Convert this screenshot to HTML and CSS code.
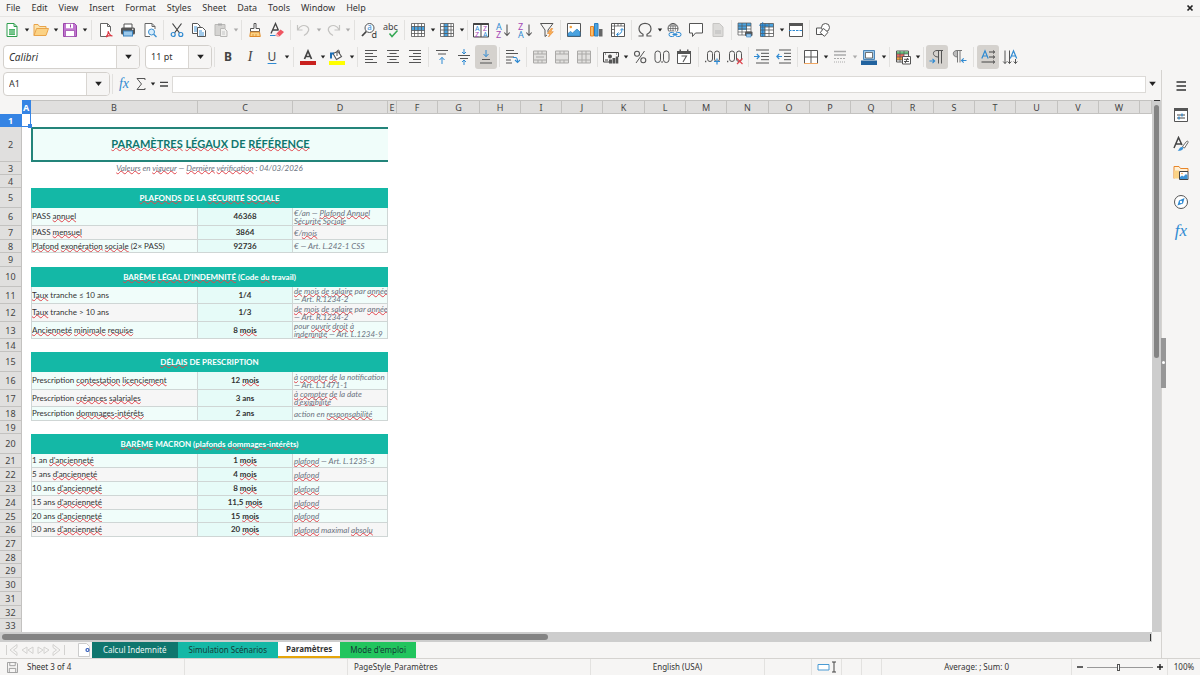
FILE: index.html
```html
<!DOCTYPE html>
<html lang="fr">
<head>
<meta charset="utf-8">
<title>Paramètres</title>
<link rel="stylesheet" href="styles.css">
</head>
<body>
<svg class="sprite" aria-hidden="true">
  <symbol id="caret" viewBox="0 0 6 4"><path d="M.8.5h4.4L3 3.4z" fill="#222"/></symbol>
  <symbol id="new" viewBox="0 0 16 16"><path d="M3 1.5h7l3 3v10H3z" fill="#fff" stroke="#2d9d4c"/><path d="M10 1.5v3h3" fill="none" stroke="#2d9d4c"/><path d="M5 7h6v6H5z" fill="#4fb56b"/><path d="M5 9h6M5 11h6" stroke="#d9f2df" stroke-width=".6"/></symbol>
  <symbol id="open" viewBox="0 0 16 16"><path d="M1 13.5v-11h4l1.5 2H13v3" fill="#fbe3ad" stroke="#e9a44a"/><path d="M1 13.5L3.5 6.5h12L13 13.5z" fill="#fbd285" stroke="#e9a44a"/></symbol>
  <symbol id="save" viewBox="0 0 16 16"><path d="M1.5 1.5h11l2 2v11h-13z" fill="#c176cf" stroke="#9a45aa"/><path d="M4 1.8h7v4.500H4z" fill="#fff"/><path d="M3.500 8.500h9v6h-9z" fill="#fff" stroke="#9a45aa" stroke-width=".7"/><path d="M8.500 2.500v3" stroke="#9a45aa"/></symbol>
  <symbol id="pdf" viewBox="0 0 16 16"><path d="M8.500 14.500H2.500v-13h7l3 3v5" fill="#fff" stroke="#666"/><path d="M9.500 1.500v3h3" fill="none" stroke="#666"/><path d="M8 15c2-2 2.500-4 2.300-6 .5 3 1.700 4.500 4.200 5-2.500-.8-4.500-.3-6.500 1z" fill="none" stroke="#d9333f" stroke-width="1.100"/></symbol>
  <symbol id="print" viewBox="0 0 16 16"><path d="M4 6V2h8v4" fill="#fff" stroke="#555"/><rect x="1" y="5.500" width="14" height="7" rx="1.500" fill="#555"/><rect x="3.500" y="9" width="9" height="5" fill="#9bc9ec" stroke="#3b82be"/><circle cx="12.800" cy="7.300" r=".7" fill="#fff"/></symbol>
  <symbol id="preview" viewBox="0 0 16 16"><path d="M13 7V4.500l-3-3H3v13h5" fill="#fff" stroke="#666"/><path d="M10 1.500v3h3" fill="none" stroke="#666"/><circle cx="9.500" cy="10" r="3" fill="#d7ecfb" stroke="#3b8fd0"/><path d="M11.700 12.200l2.800 2.800" stroke="#3b8fd0" stroke-width="1.300"/></symbol>
  <symbol id="cut" viewBox="0 0 16 16"><path d="M3.500 1.500l7 9.500M12.500 1.500L5.500 11" stroke="#444" stroke-width="1.200" fill="none"/><circle cx="4.200" cy="12.500" r="2" fill="none" stroke="#2f8ad2" stroke-width="1.200"/><circle cx="11.800" cy="12.500" r="2" fill="none" stroke="#2f8ad2" stroke-width="1.200"/></symbol>
  <symbol id="copy" viewBox="0 0 16 16"><path d="M1.500 1.500h5l2.500 2.500v7.500H1.500z" fill="#fff" stroke="#555"/><path d="M6.500 5.500h5l3 3v6h-8z" fill="#fff" stroke="#555"/><path d="M3 5h3M3 7h3M3 9h3M8 9h3M8 11h5M8 13h5" stroke="#2f8ad2" stroke-width=".9"/></symbol>
  <symbol id="paste" viewBox="0 0 16 16"><path d="M2 2.500h10v11H2z" fill="#d5d4d2" stroke="#b9b8b6"/><path d="M5 1.500h4v2H5z" fill="#aaa"/><path d="M7.500 6.500h4l2.500 2.500v5.500H7.500z" fill="#f1f0ee" stroke="#b9b8b6"/><path d="M9 10h3M9 12h3" stroke="#bbb" stroke-width=".8"/></symbol>
  <symbol id="brush" viewBox="0 0 16 16"><path d="M7 1.500h2v5h3.500v3h-9v-3H7z" fill="#fff" stroke="#555"/><path d="M3.500 10h9l.8 4.500H2.800z" fill="#fbd285" stroke="#e08b2a"/><path d="M6 14v-2M9 14v-2" stroke="#e08b2a" stroke-width=".8"/></symbol>
  <symbol id="clear" viewBox="0 0 16 16"><path d="M2 11.500L6.500 1.500 9.500 8.500M3.800 8h5" fill="none" stroke="#444" stroke-width="1.300"/><path d="M1 13.500h6" stroke="#2f8ad2"/><path d="M7.500 11.500l4-4 3.500 2.500-4.500 4.500z" fill="#ef5561"/><path d="M7.500 11.500l3 3-1.500.6-3-1.600z" fill="#f7a8ad"/></symbol>
  <symbol id="undo" viewBox="0 0 16 16"><path d="M1.500 3v5h5M2 7.500C4 3.500 8 2.500 11 4.500c3 2.200 2 6-3 9" fill="none" stroke="#c4c3c1" stroke-width="1.200"/></symbol>
  <symbol id="redo" viewBox="0 0 16 16"><path d="M14.500 3v5h-5M14 7.500C12 3.500 8 2.500 5 4.500c-3 2.200-2 6 3 9" fill="none" stroke="#c4c3c1" stroke-width="1.200"/></symbol>
  <symbol id="find" viewBox="0 0 16 16"><circle cx="8.500" cy="6" r="4.500" fill="#f9fcff" stroke="#555"/><path d="M5.300 9.500L1 14" stroke="#444" stroke-width="1.800"/><text x="6.300" y="8.300" font-size="8" fill="#2f8ad2">a</text><text x="10.500" y="15.500" font-size="9" fill="#333">d</text></symbol>
  <symbol id="spell" viewBox="0 0 16 16"><text x="0" y="7.500" font-size="9" fill="#444">abc</text><path d="M6.500 11.500l2.500 3 5.500-6" fill="none" stroke="#35a854" stroke-width="1.500"/></symbol>
  <symbol id="rows" viewBox="0 0 16 16"><path d="M1.500 1.500h13v13h-13z" fill="#fff"/><path d="M1.500 4.500h13v4h-13z" fill="#4aa3e0"/><path d="M1.500 1.500h13v13h-13zM1.500 4.500h13M1.500 8.500h13M1.500 11.500h13M4.500 1.500v13M8 1.500v13M11.500 1.500v13" fill="none" stroke="#555" stroke-width=".8"/></symbol>
  <symbol id="cols" viewBox="0 0 16 16"><path d="M1.500 1.500h13v13h-13z" fill="#fff"/><path d="M5 1.500h4v13H5z" fill="#4aa3e0"/><path d="M1.500 1.500h13v13h-13zM1.500 4.500h13M1.500 8h13M1.500 11.500h13M5 1.500v13M9 1.500v13M12 1.500v13" fill="none" stroke="#555" stroke-width=".8"/></symbol>
  <symbol id="sort" viewBox="0 0 16 16"><path d="M.5 1.500h15v13.500H.5z" fill="#fff" stroke="#444"/><path d="M.5 1h15v2H.5zM7.500 1h1v14h-1z" fill="#444"/><g font-size="7"><text x="2" y="8.800" fill="#2f8ad2">A</text><text x="2" y="14.500" fill="#a447b5">Z</text><text x="10" y="8.800" fill="#a447b5">Z</text><text x="10" y="14.500" fill="#2f8ad2">A</text></g></symbol>
  <symbol id="asc" viewBox="0 0 16 16"><g font-size="9"><text x="1" y="7.500" fill="#2f8ad2">A</text><text x="1" y="15.500" fill="#a447b5">Z</text></g><path d="M12 2.500v11M9.300 10.500L12 13.500l2.700-3" fill="none" stroke="#555" stroke-width="1.100"/></symbol>
  <symbol id="desc" viewBox="0 0 16 16"><g font-size="9"><text x="1" y="7.500" fill="#a447b5">Z</text><text x="1" y="15.500" fill="#2f8ad2">A</text></g><path d="M12 2.500v11M9.300 10.500L12 13.500l2.700-3" fill="none" stroke="#555" stroke-width="1.100"/></symbol>
  <symbol id="filter" viewBox="0 0 16 16"><path d="M1.500 1.500h12.500L9 8v2.500M1.500 1.500L6 8v6.500l2-1.500" fill="none" stroke="#555"/><path d="M12 6.500l-3.500 5h2.500L9.500 15l4.800-5.300h-2.600l2-3.200z" fill="#f9b25c" stroke="#e8862a" stroke-width=".6"/></symbol>
  <symbol id="image" viewBox="0 0 16 16"><path d="M1.500 1.500h13v13h-13z" fill="#fff" stroke="#555"/><circle cx="4.800" cy="5" r="1.300" fill="#f6a13d"/><path d="M2 14v-2.500l2.500-2 2 1.500L11 7l3 3v4z" fill="#4aa3e0" stroke="#2c7fc0" stroke-width=".7"/></symbol>
  <symbol id="chart" viewBox="0 0 16 16"><path d="M2.500 4.500h3v9.500h-3z" fill="#fbbf6b" stroke="#e8862a"/><path d="M6.500 1.500h3.500v12.500H6.500z" fill="#4aa3e0" stroke="#2c7fc0"/><path d="M11 7h3.500v7.500H11z" fill="#666"/></symbol>
  <symbol id="pivot" viewBox="0 0 16 16"><path d="M1.500 1.500h13v13h-13z" fill="#fff" stroke="#555"/><path d="M1.500 4h13M4.500 1.500v13M8 1.500V4M11 1.500V4M1.500 7.500h3M1.500 11h3" stroke="#555" stroke-width=".8"/><path d="M7 12.500c3.500 0 5-2 5-5.500M10.300 8.300L12 6.500l1.700 1.800M8.500 10.500l-2 2 2 1.800" fill="none" stroke="#2f8ad2"/></symbol>
  <symbol id="omega" viewBox="0 0 16 16"><path d="M1.500 14H6v-1.700C3.500 11 2 9 2 6.800 2 3.500 4.700 1.300 8 1.300s6 2.200 6 5.500c0 2.200-1.500 4.200-4 5.500V14h4.500" fill="none" stroke="#555" stroke-width="1.200"/></symbol>
  <symbol id="link" viewBox="0 0 16 16"><circle cx="7" cy="6.500" r="5" fill="#fff" stroke="#555"/><path d="M2 6.500h10M7 1.500v10M3 4h8M3 9h5" stroke="#555" stroke-width=".7"/><ellipse cx="7" cy="6.500" rx="2.400" ry="5" fill="none" stroke="#555" stroke-width=".7"/><path d="M2 9.500h13v6H2z" fill="#f6f5f4"/><rect x="3" y="10.500" width="5.500" height="4" rx="2" fill="none" stroke="#2f8ad2"/><rect x="9.500" y="10.500" width="5.500" height="4" rx="2" fill="none" stroke="#2f8ad2"/><path d="M6.500 12.500h5" stroke="#2f8ad2"/></symbol>
  <symbol id="comment" viewBox="0 0 16 16"><path d="M1.500 1.500h13v9.500H7.500l-3 3.500V11h-3z" fill="#fff" stroke="#555"/></symbol>
  <symbol id="page" viewBox="0 0 16 16"><path d="M3 1.500h6.500l3.500 3.500v9.500H3z" fill="#dcdbd9" stroke="#c6c5c3"/><path d="M5 9h6M5 11h6" stroke="#bbb"/></symbol>
  <symbol id="area" viewBox="0 0 16 16"><path d="M1 1h13v12H1z" fill="#fff"/><path d="M1 1h13v3H1zM1 4h9v4H1z" fill="#4aa3e0"/><path d="M1 1h13v12H1zM1 4h13M1 7h13M1 10h13M5 1v12M9.500 1v12" fill="none" stroke="#555" stroke-width=".7"/><rect x="8" y="9.500" width="7.500" height="4.500" rx="1" fill="#555"/><path d="M9.500 12h4.500v3H9.500z" fill="#9bc9ec" stroke="#3b82be" stroke-width=".6"/></symbol>
  <symbol id="freeze" viewBox="0 0 16 16"><path d="M1.500 1.500h13v13h-13z" fill="#fff"/><path d="M1.500 1.500h13V5H6v9.500H1.500z" fill="#4aa3e0"/><path d="M1.500 1.500h13v13h-13zM1.500 5h13M1.500 8h13M1.500 11.500h13M6 1.500v13M10 1.500v13" fill="none" stroke="#555" stroke-width=".8"/><path d="M3.700 0v15M0 3.200h9" stroke="#1d6fb5" stroke-width=".8"/></symbol>
  <symbol id="split" viewBox="0 0 16 16"><path d="M1.500 1.500h13v13h-13z" fill="#fff" stroke="#555"/><path d="M1 1h14v3H1z" fill="#555"/><path d="M1 8.500h14" stroke="#2f8ad2" stroke-dasharray="2.500 1"/></symbol>
  <symbol id="shapes" viewBox="0 0 16 16"><path d="M1.500 6h7v6.500h-7z" fill="#fff" stroke="#555"/><circle cx="10.500" cy="5.500" r="4" fill="#fff" stroke="#555"/><path d="M8.500 6.500l4.500 3.800-3.500 4-4.300-3.600z" fill="#fff" stroke="#555"/></symbol>
  <symbol id="fontcolor" viewBox="0 0 16 16"><path d="M4.500 10L8 2l3.500 8M5.500 7.500h5" fill="none" stroke="#444" stroke-width="1.700"/><path d="M0 12h16v4H0z" fill="#c9211e"/></symbol>
  <symbol id="fill" viewBox="0 0 16 16"><path d="M4 4.500l5-2 3.500 5-5 3z" fill="#fff" stroke="#555" stroke-width="1.100"/><path d="M8 7V2.500c0-1.800 2.500-1.800 2.500 0V5" fill="none" stroke="#555"/><path d="M2 9.500V4.500h3" fill="none" stroke="#1d6fb5" stroke-width="2"/><path d="M0 12h16v4H0z" fill="#ffff00"/></symbol>
  <symbol id="left" viewBox="0 0 16 16"><path d="M2 1.500h12M2 4.500h8M2 7.500h12M2 10.500h8M2 13.500h12" stroke="#555" stroke-width="1.100"/></symbol>
  <symbol id="center" viewBox="0 0 16 16"><path d="M2 1.500h12M4.500 4.500h7M2 7.500h12M4.500 10.500h7M2 13.500h12" stroke="#555" stroke-width="1.100"/></symbol>
  <symbol id="right" viewBox="0 0 16 16"><path d="M2 1.500h12M6 4.500h8M2 7.500h12M6 10.500h8M2 13.500h12" stroke="#555" stroke-width="1.100"/></symbol>
  <symbol id="top" viewBox="0 0 16 16"><path d="M2 1.500h12M4 5h8" stroke="#555" stroke-width="1.100"/><path d="M8 15V8.500M5.500 11L8 8.300l2.500 2.700" fill="none" stroke="#2f8ad2"/></symbol>
  <symbol id="middle" viewBox="0 0 16 16"><path d="M2 6.500h12M4 9.500h8" stroke="#555" stroke-width="1.100"/><path d="M8 0v5M6 3l2 2 2-2M8 16v-5M6 13l2-2 2 2" fill="none" stroke="#2f8ad2"/></symbol>
  <symbol id="bottom" viewBox="0 0 16 16"><path d="M4 10.500h8M2 14h12" stroke="#555" stroke-width="1.100"/><path d="M8 1v6.500M5.500 5L8 7.700 10.500 5" fill="none" stroke="#2f8ad2"/></symbol>
  <symbol id="wrap" viewBox="0 0 16 16"><path d="M1 1.500h8M1 4.500h12M1 8h8M1 11h5M1 14h6" stroke="#555" stroke-width="1.100"/><path d="M8 8.500h2.500q2 0 2 4M10 11l2.500 2.500L15 11" fill="none" stroke="#2f8ad2" stroke-width="1.100"/></symbol>
  <symbol id="merge" viewBox="0 0 16 16"><path d="M1.500 2h13v12h-13zM1.500 5h13M1.500 11h13M6 2v3M10 2v3M6 11v3M10 11v3M4 8h8" fill="#e2e1df" stroke="#aaa9a7"/></symbol>
  <symbol id="merge2" viewBox="0 0 16 16"><path d="M1.500 2h13v12h-13zM1.500 5h13M1.500 11h13M6 2v3M10 2v3M6 11v3M10 11v3" fill="#e2e1df" stroke="#aaa9a7"/></symbol>
  <symbol id="merge3" viewBox="0 0 16 16"><path d="M1.500 2h13v12h-13zM1.500 5h13M1.500 11h13M6 2v12M10 2v12" fill="#e2e1df" stroke="#aaa9a7"/></symbol>
  <symbol id="money" viewBox="0 0 16 16"><path d="M.5 3.500h15V8M.5 3.500V13H7" fill="none" stroke="#444"/><circle cx="7" cy="7.500" r="2" fill="#555"/><path d="M2 5h1M13 5h1M2 11h3" stroke="#444"/><path d="M6 10.500h3v4H6zM9.500 9h2.800v5.500H9.500zM12.800 7.500h2.500v7h-2.500z" fill="#555"/></symbol>
  <symbol id="percent" viewBox="0 0 16 16"><circle cx="5" cy="4.800" r="2.500" fill="none" stroke="#555" stroke-width="1.100"/><circle cx="11.300" cy="11.200" r="2.500" fill="none" stroke="#555" stroke-width="1.100"/><path d="M12.500 2L4 14" stroke="#555"/></symbol>
  <symbol id="number" viewBox="0 0 16 16"><rect x="1" y="2" width="5.500" height="11.500" rx="2.700" fill="none" stroke="#555"/><rect x="9.500" y="2" width="5.500" height="11.500" rx="2.700" fill="none" stroke="#555"/><path d="M7.400 13h1.300" stroke="#555" stroke-width="1.500"/></symbol>
  <symbol id="date" viewBox="0 0 16 16"><path d="M1.500 2.500h13v12h-13z" fill="#fff" stroke="#555"/><path d="M1 2h14v3H1zM3.500 .5h1.500V3H3.500zM11 .5h1.500V3H11z" fill="#555"/><path d="M5.500 7h5l-3.500 6" fill="none" stroke="#555" stroke-width="1.100"/></symbol>
  <symbol id="adddec" viewBox="0 0 16 16"><rect x="2.500" y="2" width="5" height="10.500" rx="2.500" fill="none" stroke="#555"/><rect x="9.500" y="2" width="5" height="10.500" rx="2.500" fill="none" stroke="#555"/><path d="M0 12.500h1.300" stroke="#555" stroke-width="1.300"/><path d="M12 9.500v6M9 12.500h6" stroke="#2f8ad2" stroke-width="1.200"/></symbol>
  <symbol id="deldec" viewBox="0 0 16 16"><rect x="2.500" y="2" width="5" height="10.500" rx="2.500" fill="none" stroke="#555"/><rect x="9.500" y="2" width="5" height="10.500" rx="2.500" fill="none" stroke="#555"/><path d="M0 12.500h1.300" stroke="#555" stroke-width="1.300"/><path d="M10 9.500l5.500 5.500M15.500 9.500L10 15" stroke="#e0434d" stroke-width="1.200"/></symbol>
  <symbol id="indent" viewBox="0 0 16 16"><path d="M2 1h13M7 4.300h8M7 7.500h8M7 10.700h8M2 14h13" stroke="#555"/><path d="M0 7.500h5M2.800 5l2.500 2.500L2.800 10" fill="none" stroke="#2f8ad2" stroke-width="1.100"/></symbol>
  <symbol id="outdent" viewBox="0 0 16 16"><path d="M3 1h12M8 4.300h7M8 7.500h7M8 10.700h7M3 14h12" stroke="#555"/><path d="M6 7.500H1M3.200 5L.8 7.500 3.200 10" fill="none" stroke="#2f8ad2" stroke-width="1.100"/></symbol>
  <symbol id="borders" viewBox="0 0 16 16"><path d="M1.500 14.500v-13h13v13M8 1.500v13M1.500 8h13" fill="#fff" stroke="#555"/><path d="M1 14.500h14" stroke="#f0a763"/></symbol>
  <symbol id="lines" viewBox="0 0 16 16"><path d="M2 2.500h12M2 6h12" stroke="#aaa" stroke-width="1.600"/><path d="M2 9.500h12" stroke="#aaa" stroke-dasharray="2 1"/><path d="M2 13h12" stroke="#aaa" stroke-dasharray="1 1"/></symbol>
  <symbol id="bcolor" viewBox="0 0 16 16"><path d="M2.500 1.500h11v9h-11z" fill="#9cc8ea" stroke="#4d86b8"/><path d="M4.500 3.500h7v5.500h-7z" fill="#fff" stroke="#555" stroke-width=".8"/><path d="M0 11.500h16v4.500H0z" fill="#22639f"/></symbol>
  <symbol id="cond" viewBox="0 0 16 16"><path d="M1.500 2h12v11h-12z" fill="#fff" stroke="#555"/><path d="M2 2.500h11v2.500H2z" fill="#67c27e"/><path d="M2 5h7v3H2z" fill="#ef6a64"/><path d="M2 8h5v3H2z" fill="#f6a13d"/><path d="M1.500 5h12M1.500 8h6M1.500 11h6M5 2v11M9 2v5" stroke="#555" stroke-width=".7"/><path d="M7.500 7.500h8v7.500h-8z" fill="#fff" stroke="#555"/><path d="M9 10.300h5M9 12.500h5M12.700 9l-2.500 5" stroke="#444" stroke-width=".9"/></symbol>
  <symbol id="ltr" viewBox="0 0 16 16"><path d="M9.500 14.500V1.500M12.500 14.500V1.500M14 1.500H8c-5 0-5 6.500 1.500 6.500" fill="none" stroke="#555"/><path d="M.5 12h5M3.500 9.800L5.700 12l-2.200 2.200" fill="none" stroke="#2f8ad2" stroke-width="1.100"/></symbol>
  <symbol id="rtl" viewBox="0 0 16 16"><path d="M6 1.500C1 1.500 1 8 6.500 8z" fill="#bbb"/><path d="M6.500 13.500v-12M9 13.500v-12M11 1.500H6C1 1.500 1 8 6.500 8" fill="none" stroke="#777"/><path d="M15.500 11.500h-5M12.700 9.300l-2.200 2.200 2.200 2.200" fill="none" stroke="#2f8ad2" stroke-width="1.100"/></symbol>
  <symbol id="hdir" viewBox="0 0 16 16"><path d="M1.800 9.500L5 1.800 8.200 9.500M3 7h4" fill="none" stroke="#2f8ad2" stroke-width="1.200"/><path d="M9 3h5.500M9 8h5.500M1.500 13h13M13 1.500L14.700 3 13 4.500M13 6.500L14.700 8 13 9.500M13 11.500l1.700 1.500-1.700 1.500" fill="none" stroke="#444"/></symbol>
  <symbol id="vdir" viewBox="0 0 16 16"><path d="M8.300 9.500L11.500 1.800 14.700 9.500M9.500 7h4" fill="none" stroke="#2f8ad2" stroke-width="1.200"/><path d="M3 1.500v13M7.500 1.500v13M13.500 10v4.500M1.200 12.500L3 14.500l1.800-2M5.700 12.500l1.800 2 1.800-2M11.700 12.500l1.800 2 1.800-2" fill="none" stroke="#555"/></symbol>
  <symbol id="sigma" viewBox="0 0 16 16"><path d="M12 4V2.500H4L8.500 8 4 13.500h8V12" fill="none" stroke="#555"/></symbol>
  <symbol id="equal" viewBox="0 0 16 16"><path d="M4 6.300h8M4 10h8" stroke="#444" stroke-width="1.300"/></symbol>
  <symbol id="menu" viewBox="0 0 16 16"><path d="M3.500 4h9.500M3.500 8h9.500M3.500 12h9.500" stroke="#333" stroke-width="1.400"/></symbol>
  <symbol id="props" viewBox="0 0 16 16"><path d="M1.500 1.500h13v13h-13z" fill="#fff" stroke="#555"/><path d="M1 1h14v3H1z" fill="#555"/><path d="M4 8h8M4 11h8" stroke="#444"/><path d="M9 6.500v3M6 9.500v3" stroke="#2f8ad2" stroke-width="1.300"/></symbol>
  <symbol id="style" viewBox="0 0 16 16"><path d="M1 12L5.500 1.500 9 9M2.700 8h5.500" fill="none" stroke="#444" stroke-width="1.500"/><path d="M9.500 10.500l4-5c1-1 2 0 1.500 1l-3.500 5.500z" fill="#fff" stroke="#555" stroke-width=".9"/><path d="M4.500 15c1.500-.5 1.500-4 4.500-4 2.500.5 1.500 4-4.500 4z" fill="#3d93d6"/></symbol>
  <symbol id="gallery" viewBox="0 0 16 16"><path d="M1 13.500v-12h5l1.500 2h7.500v3" fill="#fff0d6" stroke="#e8862a"/><path d="M1 13.500V5.500h5v8z" fill="#fbd285"/><path d="M6.500 6.500h8.500v8H6.500z" fill="#fff" stroke="#444"/><path d="M7 14v-2l2-1.500 1.500 1L13 9l1.500 1.500V14z" fill="#3d93d6"/><circle cx="9" cy="8.500" r=".8" fill="#f6a13d"/></symbol>
  <symbol id="compass" viewBox="0 0 16 16"><circle cx="8" cy="8" r="6.500" fill="#fff" stroke="#555"/><path d="M4.500 11.500l1.500-5 5.500-2.500-1.500 5.500z" fill="#2f8ad2"/><circle cx="8" cy="8" r="1.200" fill="#fff"/></symbol>
  <symbol id="disk" viewBox="0 0 12 12"><path d="M.5.5h9.500l1.500 1.500v9.500H.5zM3 .5v3.500h6V.5M2.500 11.500V7h7v4.500" fill="none" stroke="#999"/></symbol>
  <symbol id="nav" viewBox="0 0 62 14"><path d="M1.500 2v10M12 1.500L5 7l7 5.500V9.500L8.500 7 12 4.500zM22 4L17 7l5 3.500zM28 4l-5 3 5 3.500zM33 4l5 3-5 3.500zM39 4l5 3-5 3.500zM48 1.500L55 7l-7 5.500V9.500L51.500 7 48 4.500zM59.500 2v10" fill="none" stroke="#d3d2d0"/></symbol>
  <symbol id="addtab" viewBox="0 0 12 14"><path d="M.5.500h8l3 3v10H.5z" fill="#fff" stroke="#ccc"/><circle cx="9.500" cy="7" r="1.500" fill="#fff" stroke="#2a56b8" stroke-width="1.200"/></symbol>
  <symbol id="selmode" viewBox="0 0 20 12"><path d="M1 3.500h11v5.500H1z" fill="#fff" stroke="#4a9bd4"/><path d="M15 1h4M17 1v10M15 11h4" stroke="#444"/></symbol>
  <symbol id="minus" viewBox="0 0 8 8"><path d="M1 4h6" stroke="#222" stroke-width="1.400"/></symbol>
  <symbol id="plus" viewBox="0 0 8 8"><path d="M1 4h6M4 1v6" stroke="#222" stroke-width="1.400"/></symbol>
  <symbol id="close" viewBox="0 0 8 8"><path d="M1.500 1.500l5 5M6.500 1.500l-5 5" stroke="#222" stroke-width="1.700"/></symbol>
</svg>

<nav class="menubar">
  <button>File</button><button>Edit</button><button>View</button><button>Insert</button><button>Format</button><button>Styles</button><button>Sheet</button><button>Data</button><button>Tools</button><button>Window</button><button>Help</button>
  <button class="close" aria-label="Close"><svg class="tiny"><use href="#close"/></svg></button>
</nav>

<div class="toolbar ruled">
  <button class="tool"><svg><use href="#new"/></svg></button><button class="drop"><svg><use href="#caret"/></svg></button>
  <button class="tool"><svg><use href="#open"/></svg></button><button class="drop"><svg><use href="#caret"/></svg></button>
  <button class="tool"><svg><use href="#save"/></svg></button><button class="drop"><svg><use href="#caret"/></svg></button>
  <i class="sep wide"></i>
  <button class="tool"><svg><use href="#pdf"/></svg></button><button class="tool"><svg><use href="#print"/></svg></button><button class="tool"><svg><use href="#preview"/></svg></button>
  <i class="sep"></i>
  <button class="tool"><svg><use href="#cut"/></svg></button><button class="tool"><svg><use href="#copy"/></svg></button><button class="tool"><svg><use href="#paste"/></svg></button><button class="drop off"><svg><use href="#caret"/></svg></button>
  <i class="sep"></i>
  <button class="tool"><svg><use href="#brush"/></svg></button><button class="tool"><svg><use href="#clear"/></svg></button>
  <i class="sep"></i>
  <button class="tool"><svg><use href="#undo"/></svg></button><button class="drop off"><svg><use href="#caret"/></svg></button>
  <button class="tool"><svg><use href="#redo"/></svg></button><button class="drop off"><svg><use href="#caret"/></svg></button>
  <i class="sep wide"></i>
  <button class="tool"><svg><use href="#find"/></svg></button><button class="tool"><svg><use href="#spell"/></svg></button>
  <i class="sep"></i>
  <button class="tool"><svg><use href="#rows"/></svg></button><button class="drop"><svg><use href="#caret"/></svg></button>
  <button class="tool"><svg><use href="#cols"/></svg></button><button class="drop"><svg><use href="#caret"/></svg></button>
  <i class="sep"></i>
  <button class="tool"><svg><use href="#sort"/></svg></button><button class="tool"><svg><use href="#asc"/></svg></button><button class="tool"><svg><use href="#desc"/></svg></button><button class="tool"><svg><use href="#filter"/></svg></button>
  <i class="sep"></i>
  <button class="tool"><svg><use href="#image"/></svg></button><button class="tool"><svg><use href="#chart"/></svg></button><button class="tool"><svg><use href="#pivot"/></svg></button>
  <i class="sep"></i>
  <button class="tool"><svg><use href="#omega"/></svg></button><button class="drop"><svg><use href="#caret"/></svg></button>
  <button class="tool"><svg><use href="#link"/></svg></button><button class="tool"><svg><use href="#comment"/></svg></button><button class="tool"><svg><use href="#page"/></svg></button>
  <i class="sep"></i>
  <button class="tool"><svg><use href="#area"/></svg></button><button class="tool"><svg><use href="#freeze"/></svg></button><button class="drop"><svg><use href="#caret"/></svg></button>
  <button class="tool"><svg><use href="#split"/></svg></button>
  <i class="sep"></i>
  <button class="tool"><svg><use href="#shapes"/></svg></button>
</div>

<div class="toolbar">
  <div class="combo font"><input type="text" value="Calibri" aria-label="Font name"><button><svg class="arrow"><use href="#caret"/></svg></button></div>
  <div class="combo size"><input type="text" value="11 pt" aria-label="Font size"><button><svg class="arrow"><use href="#caret"/></svg></button></div>
  <i class="sep"></i>
  <button class="tool letter bold">B</button><button class="tool letter italic">I</button><button class="tool letter under">U</button><button class="drop"><svg><use href="#caret"/></svg></button>
  <i class="sep wide"></i>
  <button class="tool"><svg><use href="#fontcolor"/></svg></button><button class="drop"><svg><use href="#caret"/></svg></button>
  <button class="tool"><svg><use href="#fill"/></svg></button><button class="drop"><svg><use href="#caret"/></svg></button>
  <i class="sep"></i>
  <button class="tool"><svg><use href="#left"/></svg></button><button class="tool"><svg><use href="#center"/></svg></button><button class="tool"><svg><use href="#right"/></svg></button>
  <i class="sep"></i>
  <button class="tool"><svg><use href="#top"/></svg></button><button class="tool"><svg><use href="#middle"/></svg></button><button class="tool on"><svg><use href="#bottom"/></svg></button>
  <i class="sep"></i>
  <button class="tool"><svg><use href="#wrap"/></svg></button>
  <i class="sep"></i>
  <button class="tool"><svg><use href="#merge"/></svg></button><button class="tool"><svg><use href="#merge2"/></svg></button><button class="tool"><svg><use href="#merge3"/></svg></button>
  <i class="sep"></i>
  <button class="tool"><svg><use href="#money"/></svg></button><button class="drop"><svg><use href="#caret"/></svg></button>
  <button class="tool"><svg><use href="#percent"/></svg></button><button class="tool"><svg><use href="#number"/></svg></button><button class="tool"><svg><use href="#date"/></svg></button>
  <i class="sep wide"></i>
  <button class="tool"><svg><use href="#adddec"/></svg></button><button class="tool"><svg><use href="#deldec"/></svg></button>
  <i class="sep"></i>
  <button class="tool"><svg><use href="#indent"/></svg></button><button class="tool"><svg><use href="#outdent"/></svg></button>
  <i class="sep"></i>
  <button class="tool"><svg><use href="#borders"/></svg></button><button class="drop"><svg><use href="#caret"/></svg></button>
  <button class="tool"><svg><use href="#lines"/></svg></button><button class="drop off"><svg><use href="#caret"/></svg></button>
  <button class="tool"><svg><use href="#bcolor"/></svg></button><button class="drop"><svg><use href="#caret"/></svg></button>
  <i class="sep"></i>
  <button class="tool"><svg><use href="#cond"/></svg></button><button class="drop"><svg><use href="#caret"/></svg></button>
  <i class="sep"></i>
  <button class="tool on"><svg><use href="#ltr"/></svg></button><button class="tool"><svg><use href="#rtl"/></svg></button>
  <i class="sep wide"></i>
  <button class="tool on"><svg><use href="#hdir"/></svg></button><button class="tool"><svg><use href="#vdir"/></svg></button>
</div>

<main class="work">
  <section class="document">
    <div class="formulabar">
      <div class="combo name"><input type="text" value="A1" aria-label="Name box"><button><svg class="arrow"><use href="#caret"/></svg></button></div>
      <i class="sep"></i>
      <button class="fx">fx</button>
      <button class="mini"><svg><use href="#sigma"/></svg></button><button class="drop"><svg><use href="#caret"/></svg></button>
      <button class="mini"><svg><use href="#equal"/></svg></button>
      <input class="formula" type="text" aria-label="Formula">
      <button class="expand"><svg class="arrow"><use href="#caret"/></svg></button>
    </div>
    <div class="viewport">
      <div class="pane">
        <table class="sheet">
          <colgroup><col class="c-head"><col class="c-a"><col class="c-b"><col class="c-c"><col class="c-c"><col class="c-a"><col class="c-n"><col class="c-w"><col class="c-n"><col class="c-n"><col class="c-n"><col class="c-w"><col class="c-n"><col class="c-n"><col class="c-w"><col class="c-n"><col class="c-n"><col class="c-n"><col class="c-w"><col class="c-n"><col class="c-n"><col class="c-w"><col class="c-n"><col class="c-n"><col></colgroup>
          <thead><tr class="head"><td></td><th class="cur">A</th><th>B</th><th>C</th><th>D</th><th>E</th><th>F</th><th>G</th><th>H</th><th>I</th><th>J</th><th>K</th><th>L</th><th>M</th><th>N</th><th>O</th><th>P</th><th>Q</th><th>R</th><th>S</th><th>T</th><th>U</th><th>V</th><th>W</th><th></th></tr></thead>
          <tbody>
            <tr class="h13"><th class="cur">1</th><td class="active"><i></i></td></tr>
            <tr class="h35"><th>2</th><td></td><td colspan="3" class="title"><u>PARAMÈTRES</u> <u>LÉGAUX</u> DE <u>RÉFÉRENCE</u></td></tr>
            <tr class="h13"><th>3</th><td></td><td colspan="3" class="subtitle"><u>Valeurs</u> en <u>vigueur</u> — <u>Dernière</u> <u>vérification</u> : 04/03/2026</td></tr>
            <tr class="h13"><th>4</th></tr>
            <tr class="h20"><th>5</th><td></td><td colspan="3" class="band"><u>PLAFONDS</u> DE LA <u>SÉCURITÉ</u> <u>SOCIALE</u></td></tr>
            <tr class="h18"><th>6</th><td></td><td class="label">PASS <u>annuel</u></td><td class="value">46368</td><td class="note">€/an — <u>Plafond</u> <u>Annuel</u><br><u>Sécurité</u> <u>Sociale</u></td></tr>
            <tr class="h14 odd"><th>7</th><td></td><td class="label">PASS <u>mensuel</u></td><td class="value">3864</td><td class="note">€/<u>mois</u></td></tr>
            <tr class="h13"><th>8</th><td></td><td class="label"><u>Plafond</u> <u>exonération</u> <u>sociale</u> (2× PASS)</td><td class="value">92736</td><td class="note">€ — Art. L.242-1 CSS</td></tr>
            <tr class="h14"><th>9</th></tr>
            <tr class="h20"><th>10</th><td></td><td colspan="3" class="band"><u>BARÈME</u> <u>LÉGAL</u> <u>D'INDEMNITÉ</u> (Code <u>du</u> travail)</td></tr>
            <tr class="h17"><th>11</th><td></td><td class="label"><u>Taux</u> tranche ≤ 10 ans</td><td class="value">1/4</td><td class="note"><u>de</u> <u>mois</u> <u>de</u> <u>salaire</u> par <u>année</u><br>— Art. R.1234-2</td></tr>
            <tr class="h18 odd"><th>12</th><td></td><td class="label"><u>Taux</u> tranche &gt; 10 ans</td><td class="value">1/3</td><td class="note"><u>de</u> <u>mois</u> <u>de</u> <u>salaire</u> par <u>année</u><br>— Art. R.1234-2</td></tr>
            <tr class="h17"><th>13</th><td></td><td class="label"><u>Ancienneté</u> <u>minimale</u> <u>requise</u></td><td class="value">8 <u>mois</u></td><td class="note">pour <u>ouvrir</u> <u>droit</u> <u>à</u><br><u>indemnité</u> — Art. L.1234-9</td></tr>
            <tr class="h13"><th>14</th></tr>
            <tr class="h20"><th>15</th><td></td><td colspan="3" class="band"><u>DÉLAIS</u> DE PRESCRIPTION</td></tr>
            <tr class="h18"><th>16</th><td></td><td class="label">Prescription <u>contestation</u> <u>licenciement</u></td><td class="value">12 <u>mois</u></td><td class="note"><u>à</u> <u>compter</u> <u>de</u> la notification<br>— Art. L.1471-1</td></tr>
            <tr class="h17 odd"><th>17</th><td></td><td class="label">Prescription <u>créances</u> <u>salariales</u></td><td class="value">3 ans</td><td class="note"><u>à</u> <u>compter</u> <u>de</u> la date<br><u>d'exigibilité</u></td></tr>
            <tr class="h14"><th>18</th><td></td><td class="label">Prescription <u>dommages-intérêts</u></td><td class="value">2 ans</td><td class="note">action en <u>responsabilité</u></td></tr>
            <tr class="h13"><th>19</th></tr>
            <tr class="h20"><th>20</th><td></td><td colspan="3" class="band"><u>BARÈME</u> MACRON (<u>plafonds</u> <u>dommages-intérêts</u>)</td></tr>
            <tr class="h14"><th>21</th><td></td><td class="label">1 an <u>d'ancienneté</u></td><td class="value">1 <u>mois</u></td><td class="note"><u>plafond</u> — Art. L.1235-3</td></tr>
            <tr class="h14 odd"><th>22</th><td></td><td class="label">5 ans <u>d'ancienneté</u></td><td class="value">4 <u>mois</u></td><td class="note"><u>plafond</u></td></tr>
            <tr class="h14"><th>23</th><td></td><td class="label">10 ans <u>d'ancienneté</u></td><td class="value">8 <u>mois</u></td><td class="note"><u>plafond</u></td></tr>
            <tr class="h14 odd"><th>24</th><td></td><td class="label">15 ans <u>d'ancienneté</u></td><td class="value">11,5 <u>mois</u></td><td class="note"><u>plafond</u></td></tr>
            <tr class="h13"><th>25</th><td></td><td class="label">20 ans <u>d'ancienneté</u></td><td class="value">15 <u>mois</u></td><td class="note"><u>plafond</u></td></tr>
            <tr class="h14 odd"><th>26</th><td></td><td class="label">30 ans <u>d'ancienneté</u></td><td class="value">20 <u>mois</u></td><td class="note"><u>plafond</u> maximal <u>absolu</u></td></tr>
            <tr class="h14"><th>27</th></tr>
            <tr class="h13"><th>28</th></tr>
            <tr class="h14"><th>29</th></tr>
            <tr class="h14"><th>30</th></tr>
            <tr class="h14"><th>31</th></tr>
            <tr class="h13"><th>32</th></tr>
            <tr class="h14"><th>33</th></tr>
          </tbody>
        </table>
      </div>
      <div class="vscroll"><i class="splitter"></i><i class="thumb"></i></div>
    </div>
    <div class="hscroll"><i class="thumb"></i><i class="splitter"></i></div>
    <div class="tabs">
      <svg class="nav"><use href="#nav"/></svg>
      <button class="add" aria-label="Add sheet"><svg><use href="#addtab"/></svg></button>
      <button class="tab dark">Calcul Indemnité</button>
      <button class="tab teal">Simulation Scénarios</button>
      <button class="tab current">Paramètres</button>
      <button class="tab green">Mode d'emploi</button>
    </div>
  </section>
  <aside class="sidebar">
    <button><svg><use href="#menu"/></svg></button>
    <button><svg><use href="#props"/></svg></button>
    <button><svg><use href="#style"/></svg></button>
    <button><svg><use href="#gallery"/></svg></button>
    <button><svg><use href="#compass"/></svg></button>
    <button class="fx large">fx</button>
    <span class="grip"></span>
  </aside>
</main>

<footer class="status">
  <span class="cell-save"><svg><use href="#disk"/></svg></span>
  <span class="cell-sheet">Sheet 3 of 4</span>
  <span class="cell-gap"></span>
  <span class="cell-style">PageStyle_Paramètres</span>
  <span class="cell-lang">English (USA)</span>
  <span class="cell-s"></span>
  <span class="cell-mode"><svg><use href="#selmode"/></svg></span>
  <span class="cell-x"></span>
  <span class="cell-x"></span>
  <span class="cell-sum">Average: ; Sum: 0</span>
  <span class="cell-zoom"><button aria-label="Zoom out"><svg class="tiny"><use href="#minus"/></svg></button><input type="range" min="0" max="100" value="48" aria-label="Zoom"><button aria-label="Zoom in"><svg class="tiny"><use href="#plus"/></svg></button></span>
  <span class="cell-pct">100%</span>
</footer>
</body>
</html>
```
FILE: styles.css
```css
* { box-sizing: border-box; }
html, body { height: 100%; }
body {
  margin: 0;
  display: flex;
  flex-direction: column;
  overflow: hidden;
  background: #f6f5f4;
  color: #333;
  font: 9px/12px "Noto Sans", sans-serif;
}
button, input { font: inherit; color: inherit; margin: 0; padding: 0; border: 0; background: none; }
svg { display: block; width: 16px; height: 16px; flex: none; }
svg.tiny { width: 8px; height: 8px; }
svg.arrow { width: 9px; height: 6px; }
.sprite { display: none; }

.menubar { display: flex; align-items: center; flex: none; height: 16px; padding: 0 6px; gap: 11px; }
.menubar .close { margin-left: auto; }

.toolbar { display: flex; align-items: center; flex: none; height: 27px; padding: 0 1px; }
.toolbar.ruled { border-top: 1px solid #e6e5e3; }
.tool { width: 22px; height: 24px; display: flex; align-items: center; justify-content: center; border-radius: 3px; flex: none; }
.tool.on { background: #d5d2ce; }
.drop { width: 7px; height: 24px; display: flex; align-items: center; justify-content: center; flex: none; }
.drop svg { width: 6px; height: 4px; }
.drop.off { opacity: .35; }
.sep { width: 5px; height: 20px; flex: none; display: flex; justify-content: center; }
.sep.wide { width: 7px; }
.sep::before { content: ""; width: 1px; background: #e2e1df; }
.letter { font-size: 12px; color: #444; }
.bold { font-weight: 700; }
.italic { font-family: "Liberation Serif", serif; font-size: 14px; font-style: italic; }
.under { text-decoration: underline #2f8ad2 1px; text-underline-offset: 2px; }

.combo { display: flex; height: 24px; border: 1px solid #d3d0cc; border-radius: 4px; background: #fff; overflow: hidden; flex: none; }
.combo input { flex: 1; min-width: 0; padding-left: 5px; }
.combo button { width: 23px; display: flex; align-items: center; justify-content: center; background: #f6f5f4; border-left: 1px solid #d9d6d2; }
.combo.font { width: 137px; margin: 0 5px 0 2px; }
.combo.font input { font-size: 10px; font-style: italic; }
.combo.size { width: 67px; }
.combo.name { width: 107px; }

.work { flex: 1; min-height: 0; display: flex; }
.document { flex: 1; min-width: 0; display: flex; flex-direction: column; }
.formulabar { flex: none; height: 30px; display: flex; align-items: center; padding: 0 3px 2px; }
.mini { width: 16px; flex: none; }
.fx { width: 18px; flex: none; color: #2f8ad2; font: italic 14px/14px "Liberation Serif", serif; }
.fx.large { font-size: 17px; width: auto; }
.formula { flex: 1; min-width: 0; height: 17px; border: 1px solid #dcdad7; background: #fff; }
.expand { width: 12px; display: flex; justify-content: center; }

.viewport { flex: 1; min-height: 0; display: flex; }
.pane { flex: 1; min-width: 0; overflow: hidden; background: #fff; }
.sheet { width: 100%; table-layout: fixed; border-collapse: separate; border-spacing: 0; }
.c-head { width: 22px; }
.c-a { width: 9px; }
.c-b { width: 167px; }
.c-c { width: 95px; }
.c-n { width: 41px; }
.c-w { width: 42px; }
.sheet th, .sheet td { padding: 0; line-height: 9px; overflow: hidden; }
.sheet th { background: #e0dfde; border-right: 1px solid #c3c2c0; border-bottom: 1px solid #c3c2c0; font-weight: 400; color: #444; text-align: center; }
.sheet .head th { border-top: 1px solid #c3c2c0; }
.sheet .head td { background: #f6f5f4; }
.sheet th.cur { background: #3584e4; border-color: #3584e4; color: #fff; font-weight: 700; }
.head { height: 14px; }
.h13 { height: 13px; }
.h14 { height: 14px; }
.h17 { height: 17px; }
.h18 { height: 18px; }
.h20 { height: 20px; }
.h35 { height: 35px; }
.sheet .active { position: relative; overflow: visible; border: solid #3584e4; border-width: 0 1px 1px 0; }
.active i { position: absolute; right: -2px; bottom: -2px; width: 4px; height: 4px; background: #3584e4; }
.sheet .title, .sheet .subtitle, .sheet .band, .sheet .label, .sheet .value, .sheet .note { font-family: Lato, sans-serif; text-align: center; white-space: nowrap; }
.sheet .title { border: 2px solid #23847a; border-right: 0; padding-bottom: 2px; background: #f0fdfa; color: #0f766e; font-size: 11px; line-height: 14px; font-weight: 700; }
.sheet .subtitle { color: #6b7280; font-size: 8px; font-style: italic; }
.sheet .band { background: #14b8a6; color: #fff; font-size: 8px; font-weight: 700; }
.sheet .label { font-size: 8px; text-align: left; background: #f0fdfa; border: solid #cfd6d5; border-width: 0 1px 1px 1px; }
.sheet .value { font-size: 8px; font-weight: 700; background: #e6fbf8; border: solid #cfd6d5; border-width: 0 1px 1px 0; }
.sheet .note { font-size: 8px; line-height: 8px; font-style: italic; text-align: left; padding-left: 1px; color: #6b7280; background: #f0fdfa; border: solid #cfd6d5; border-width: 0 1px 1px 0; }
.sheet .odd .label, .sheet .odd .note { background: #f6f6f6; }
.sheet u { text-decoration: underline wavy #e2444c 1px; text-underline-offset: -1px; text-decoration-skip-ink: none; }

.vscroll { width: 9px; flex: none; background: #cdcdcd; padding-left: 2px; }
.vscroll .splitter { display: block; width: 6px; height: 1px; margin-bottom: 4px; background: #333; }
.vscroll .thumb { display: block; width: 5px; height: 47.5%; border-radius: 3px; background: #838383; }
.hscroll { height: 10px; flex: none; display: flex; align-items: center; justify-content: space-between; background: #cdcdcd; margin-right: 9px; padding: 0 1px 0 2px; }
.hscroll .thumb { width: 47.5%; height: 6px; border-radius: 3px; background: #838383; }
.hscroll .splitter { width: 1px; height: 7px; background: #333; }

.tabs { height: 16px; flex: none; display: flex; align-items: stretch; padding-left: 5px; }
.nav { width: 62px; height: 14px; margin: 1px 11px 0 0; }
.add { width: 14px; }
.add svg { width: 12px; height: 14px; }
.tab { font-size: 8px; padding: 0 11px; color: #143b36; }
.tab.dark { background: #0f766e; color: #e8f5f3; }
.tab.teal { background: #14b8a6; }
.tab.current { background: #fff; color: #333; font-weight: 700; padding: 0 8px; border-bottom: 2px solid #e5a50a; }
.tab.green { background: #22c55e; padding: 0 10px; }

.sidebar { position: relative; width: 39px; flex: none; border-left: 1px solid #d5d3d0; display: flex; flex-direction: column; align-items: center; gap: 13px; padding-top: 8px; }
.sidebar button { height: 16px; }
.grip { position: absolute; left: -1px; top: calc(50% - 26px); width: 5px; height: 50px; background: #979797; }
.grip::after { content: ""; position: absolute; left: 1px; top: 23px; width: 3px; height: 3px; border-radius: 50%; background: #fff; }

.status { flex: none; height: 17px; display: flex; border-top: 1px solid #d5d3d0; font-size: 8px; }
.status > span { display: flex; align-items: center; justify-content: center; border-right: 1px solid #e3e2e0; }
.status .cell-save { width: 24px; border: 0; }
.status .cell-save svg { width: 11px; height: 11px; }
.status .cell-sheet { flex: 161; justify-content: flex-start; text-indent: 3px; }
.status .cell-gap { flex: 163; }
.status .cell-style { flex: 243; justify-content: flex-start; text-indent: 6px; }
.status .cell-lang { flex: 175; }
.status .cell-s { flex: 46; }
.status .cell-mode { width: 30px; }
.status .cell-mode svg { width: 20px; height: 12px; }
.status .cell-x { width: 20px; }
.status .cell-sum { flex: 190; }
.status .cell-zoom { width: 96px; gap: 3px; }
.status .cell-pct { width: 32px; border: 0; }
input[type="range"] { appearance: none; width: 66px; height: 10px; }
input[type="range"]::-webkit-slider-runnable-track { height: 1px; background: #999; }
input[type="range"]::-webkit-slider-thumb { appearance: none; width: 3px; height: 7px; margin-top: -3px; background: #fff; border: 1px solid #555; }
```
